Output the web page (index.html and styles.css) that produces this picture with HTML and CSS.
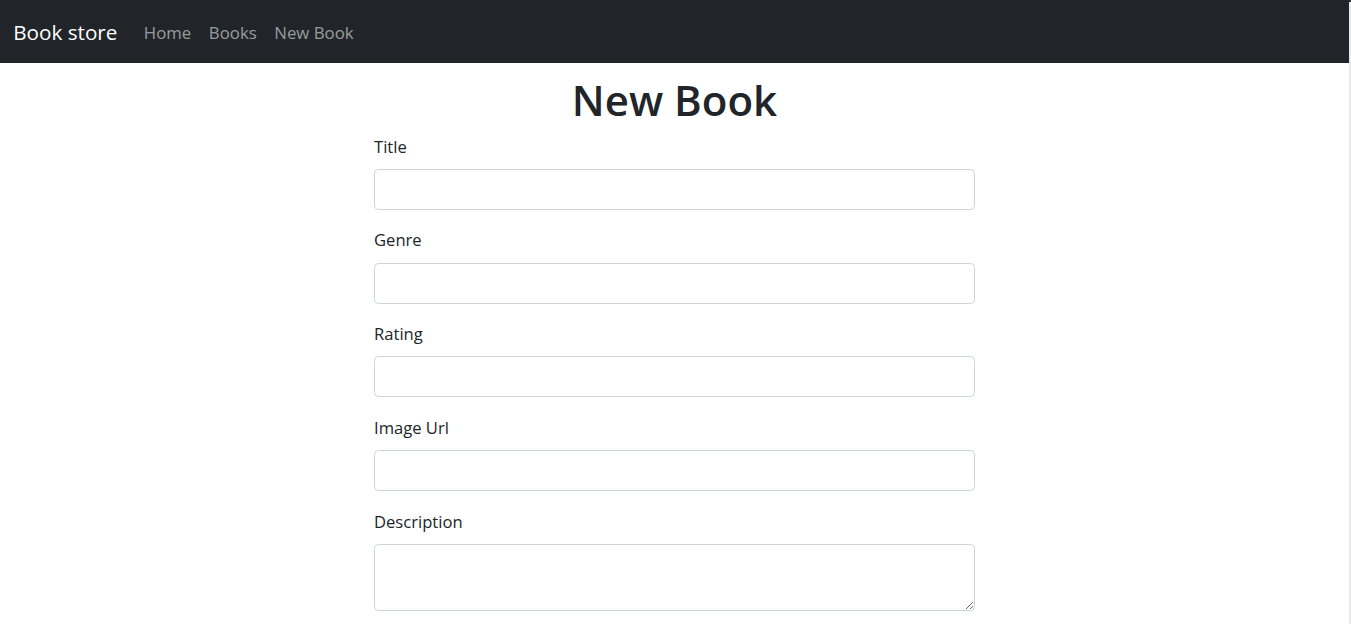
FILE: index.html
```html
<!DOCTYPE html>
<html lang="en">
<head>
<meta charset="utf-8">
<title>Book store</title>
<link rel="stylesheet" href="styles.css">
</head>
<body>
<div class="page">
  <nav class="navbar">
    <a class="brand" href="#">Book store</a>
    <ul class="nav">
      <li><a class="nav-link" href="#">Home</a></li>
      <li><a class="nav-link" href="#">Books</a></li>
      <li><a class="nav-link" href="#">New Book</a></li>
    </ul>
  </nav>
  <main class="content">
    <h1 class="title">New Book</h1>
    <form class="form">
      <div class="group">
        <label class="label" for="title">Title</label>
        <input class="control" id="title" type="text">
      </div>
      <div class="group">
        <label class="label" for="genre">Genre</label>
        <input class="control" id="genre" type="text">
      </div>
      <div class="group">
        <label class="label" for="rating">Rating</label>
        <input class="control" id="rating" type="text">
      </div>
      <div class="group">
        <label class="label" for="image">Image Url</label>
        <input class="control" id="image" type="text">
      </div>
      <div class="group">
        <label class="label" for="desc">Description</label>
        <textarea class="control area" id="desc" rows="2"></textarea>
      </div>
    </form>
  </main>
</div>
<div class="scrollbar"></div>
</body>
</html>
```
FILE: styles.css
```css
* { box-sizing: border-box; }
html, body { height: 100%; }
body {
  margin: 0;
  display: flex;
  overflow: hidden;
  font-family: "Open Sans", "Noto Sans", sans-serif;
  font-size: 17.6px;
  line-height: 1.5;
  color: #212529;
  background: #fff;
}
.page { flex: 1; min-width: 0; }
.scrollbar { width: 2px; background: #e9e9e9; border-top: 2px solid #2a2a2a; }
.navbar {
  display: flex;
  align-items: center;
  height: 63px;
  padding: 2px 13.2px 0;
  background: #212529;
}
.brand {
  font-size: 20.7px;
  color: #fff;
  text-decoration: none;
  margin-right: 17.6px;
  line-height: 1.5;
}
.nav { display: flex; list-style: none; margin: 0; padding: 0; }
.nav-link {
  display: block;
  padding: 0 8.8px;
  font-size: 16.8px;
  color: rgba(255,255,255,.55);
  text-decoration: none;
}
.content { width: 601px; margin: 0 auto; }
.title {
  margin: 11px 0 6.8px;
  text-align: center;
  font-size: 42px;
  font-weight: 600;
  line-height: 52.8px;
}
.group { margin-bottom: 17.6px; }
.label {
  display: block;
  margin-bottom: 8.8px;
  font-size: 16.6px;
  line-height: 26.4px;
}
.control {
  display: block;
  width: 100%;
  height: 41px;
  padding: 6.6px 13.2px;
  font: inherit;
  color: #212529;
  background: #fff;
  border: 1px solid #ced4da;
  border-radius: 4.4px;
}
.area { height: 67px; resize: vertical; }
```
